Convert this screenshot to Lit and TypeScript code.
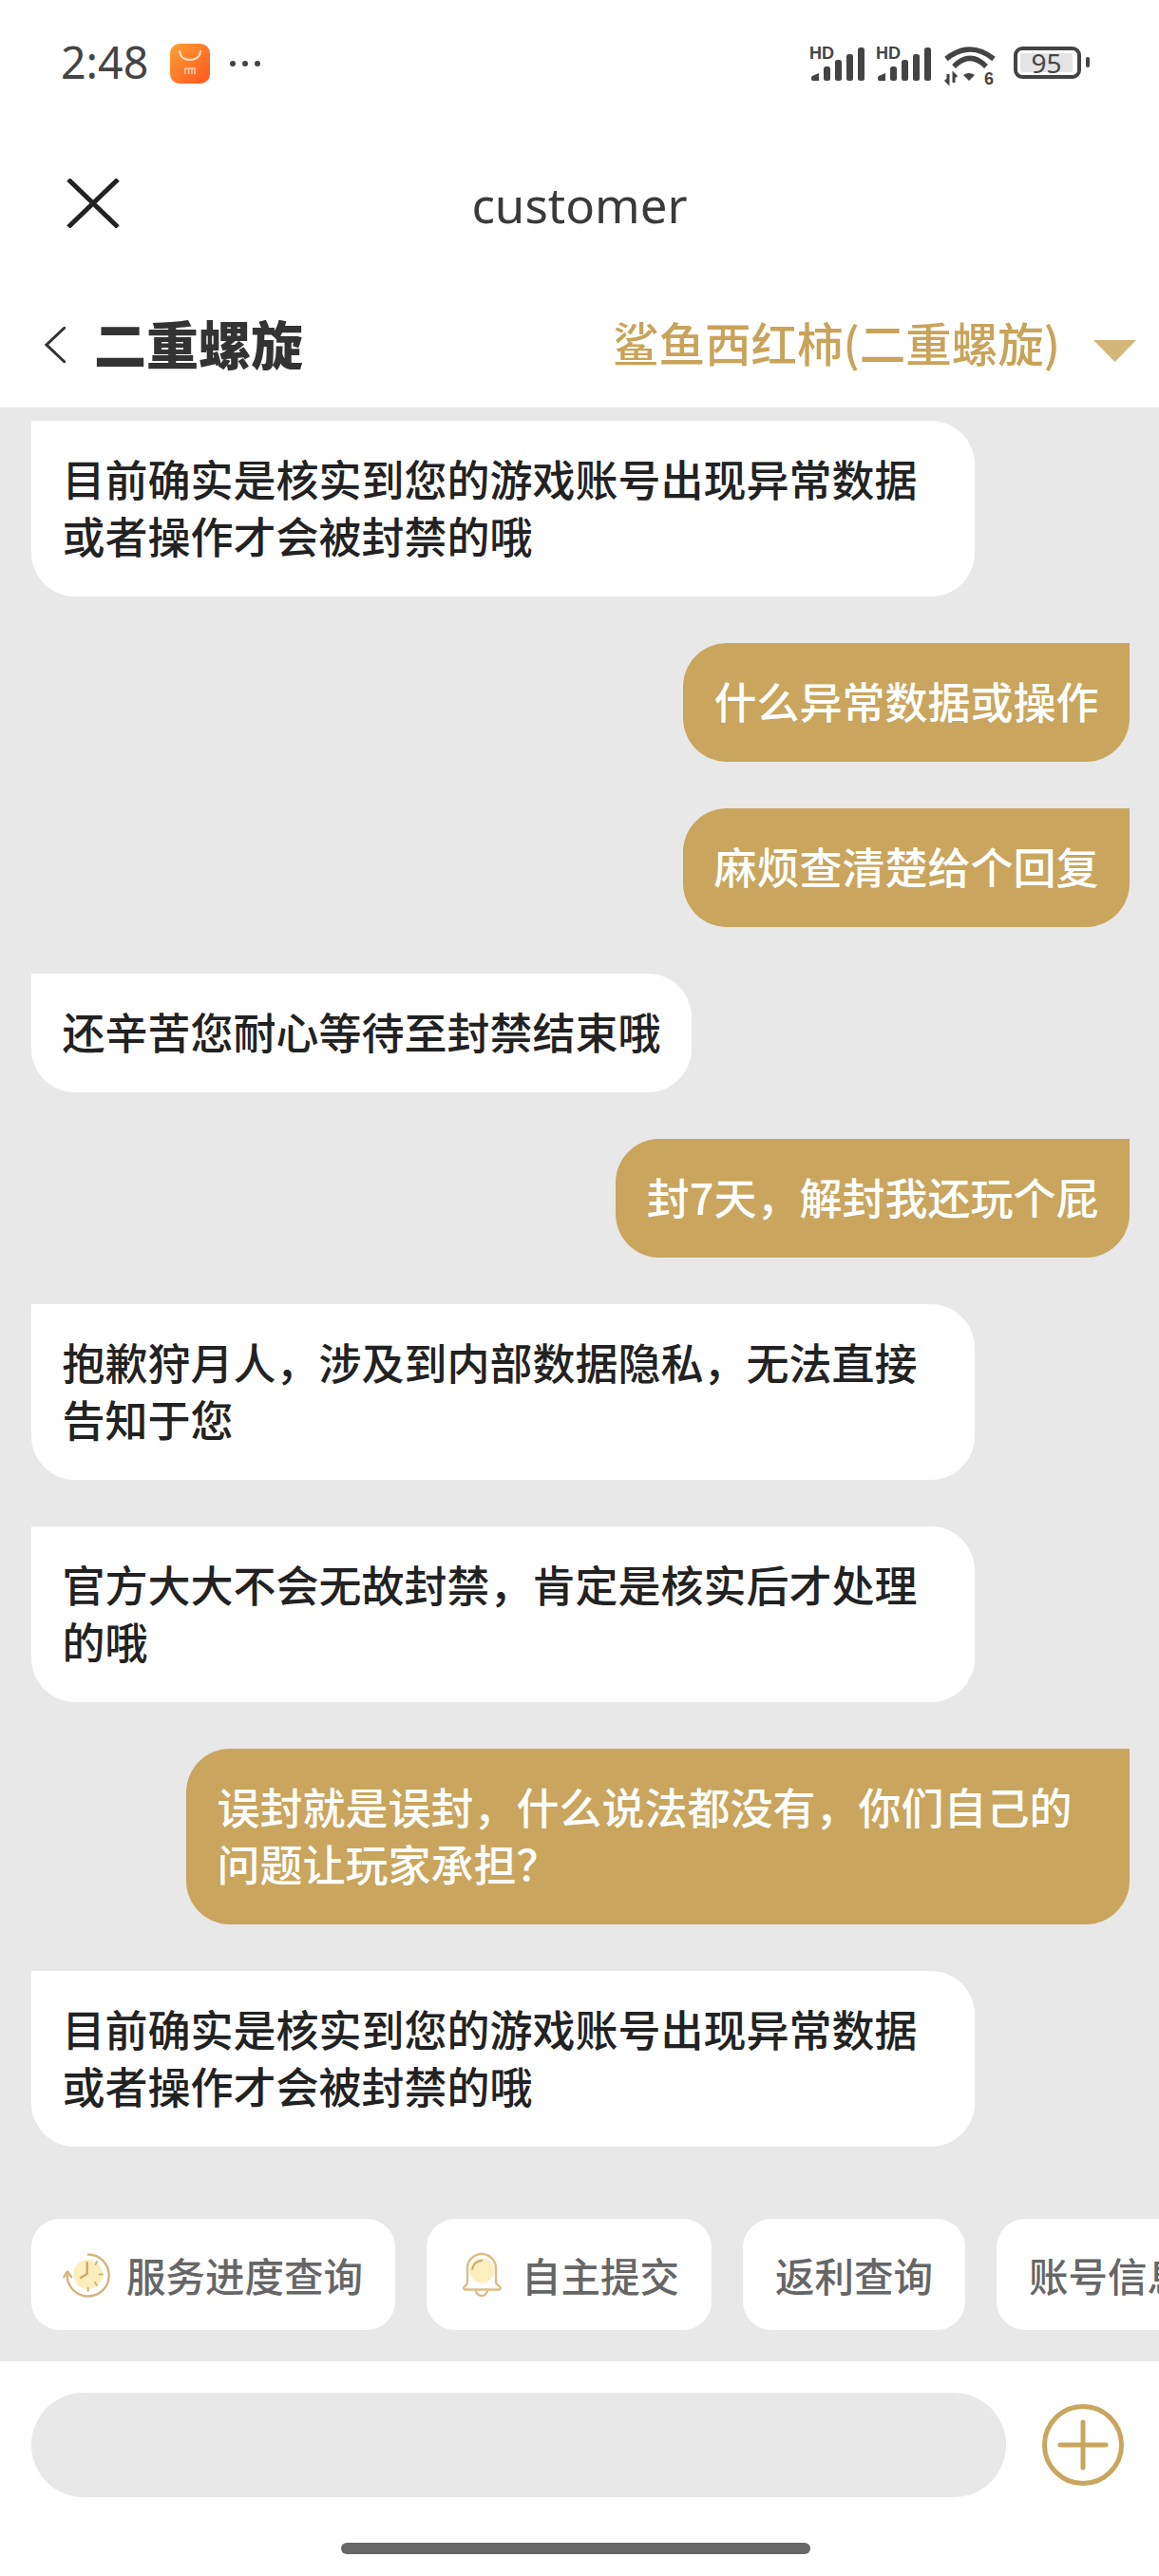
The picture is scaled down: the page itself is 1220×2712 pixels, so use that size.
import { LitElement, html, css, svg } from "lit";
import { customElement } from "lit/decorators.js";

type Msg = { me?: boolean; text: string };

const MESSAGES: Msg[] = [
  { text: "目前确实是核实到您的游戏账号出现异常数据或者操作才会被封禁的哦" },
  { me: true, text: "什么异常数据或操作" },
  { me: true, text: "麻烦查清楚给个回复" },
  { text: "还辛苦您耐心等待至封禁结束哦" },
  { me: true, text: "封7天，解封我还玩个屁" },
  { text: "抱歉狩月人，涉及到内部数据隐私，无法直接告知于您" },
  { text: "官方大大不会无故封禁，肯定是核实后才处理的哦" },
  { me: true, text: "误封就是误封，什么说法都没有，你们自己的问题让玩家承担？" },
  { text: "目前确实是核实到您的游戏账号出现异常数据或者操作才会被封禁的哦" },
];

const signal = () => html`
  <div class="signal">
    <span class="hd">HD</span>
    <svg width="57" height="36" viewBox="0 0 57 36" fill="#444">
      <path d="M1.500 36Q0 36 0 34v-1q0-1 1-2l7-3v8z" />
      <rect x="13" y="21" width="7" height="15" rx="2.500" />
      <rect x="25" y="14" width="7" height="22" rx="2.500" />
      <rect x="37" y="8" width="7" height="28" rx="2.500" />
      <rect x="49" y="1" width="7" height="35" rx="2.500" />
    </svg>
  </div>
`;

const clockIcon = svg`
  <svg width="50" height="50" viewBox="0 0 50 50" fill="none">
    <circle cx="26.700" cy="24.500" r="15.500" fill="#fdeec0" />
    <path d="M27 3.500A22 22 0 1 1 4.700 25.500" stroke="#d6b477" stroke-width="2.400" stroke-linecap="round" />
    <path d="M1.300 27L5 21.500 9 27" stroke="#d6b477" stroke-width="2.400" stroke-linecap="round" stroke-linejoin="round" />
    <path d="M25.700 12v12L19 28" stroke="#cfa865" stroke-width="2.400" stroke-linecap="round" stroke-linejoin="round" />
    <path d="M36 11l-1.500 3M42 24.500h-3.500M36 36l-2-3M26.700 42v-3.500" stroke="#d6b477" stroke-width="2" stroke-linecap="round" />
  </svg>
`;

const bellIcon = svg`
  <svg width="50" height="50" viewBox="0 0 50 50" fill="none">
    <circle cx="25.300" cy="20.500" r="13" fill="#fdeec0" />
    <path d="M19 41a6 6 0 0 0 12 0" stroke="#dcbd85" stroke-width="2.400" />
    <path d="M10 32V18a15 15 0 0 1 30 0v14q0 2.500 3 4.500q3 2 1 4H7q-2-2 1-4q2-2 2-4.500z" stroke="#dcbd85" stroke-width="2.400" stroke-linejoin="round" />
    <path d="M15.300 18.800q1-7.500 10-9" stroke="#cfa865" stroke-width="2" stroke-linecap="round" />
  </svg>
`;

@customElement("app-root")
export class AppRoot extends LitElement {
  static styles = css`
    :host {
      display: flex;
      flex-direction: column;
      width: 1220px;
      height: 2712px;
      overflow: hidden;
      background: #fff;
      font-family: "Noto Sans CJK SC", "Noto Sans", sans-serif;
    }

    .status {
      height: 136px;
      flex: none;
      box-sizing: border-box;
      padding: 46px 73px 0 64px;
      display: flex;
      align-items: flex-start;
      color: #444;
    }
    .time {
      font: 400 46.500px/42px "Noto Sans", sans-serif;
      margin-top: -2px;
    }
    .app-icon {
      margin-left: 23px;
      flex: none;
    }
    .dots {
      margin: 18px 0 0 21px;
      display: flex;
      gap: 7px;
    }
    .dots i {
      width: 6px;
      height: 6px;
      border-radius: 50%;
      background: #444;
    }
    .status-right {
      margin-left: auto;
      display: flex;
      align-items: flex-start;
    }
    .signal {
      width: 70px;
      height: 36px;
      padding-left: 3px;
      box-sizing: border-box;
      margin-top: 3px;
      position: relative;
    }
    .hd {
      position: absolute;
      left: 1px;
      top: -2px;
      font: 700 18px/18px "Liberation Sans", sans-serif;
    }
    .wifi {
      margin: 2px 0 0 3px;
    }
    .battery {
      margin-left: 19px;
      margin-top: 3px;
      width: 71px;
      height: 34px;
      box-sizing: border-box;
      border: 4px solid #444;
      border-radius: 9px;
      padding: 3px;
    }
    .battery-fill {
      width: 55px;
      height: 20px;
      background: #e4e4e4;
      border-radius: 2px;
      font: 400 28px/20px "Noto Sans", sans-serif;
      text-align: center;
      color: #444;
    }
    .battery-tip {
      width: 4px;
      height: 11px;
      background: #444;
      border-radius: 2px;
      margin: 14px 0 0 5px;
    }

    .title-bar {
      height: 155px;
      flex: none;
      display: grid;
      grid-template-columns: 1fr auto 1fr;
      align-items: center;
      padding: 0 70px;
      box-sizing: border-box;
    }
    .title-bar h1 {
      margin: 2px 0 0;
      font: 400 51px/60px "Noto Sans", sans-serif;
      color: #3a3a3a;
    }
    .close {
      display: block;
    }

    .game-bar {
      height: 138px;
      flex: none;
      box-sizing: border-box;
      padding: 0 24px 0 47px;
      display: flex;
      align-items: center;
    }
    .back {
      margin-top: 6px;
      flex: none;
    }
    .game-bar h2 {
      margin: 0 0 0 30px;
      font-size: 55px;
      font-weight: 900;
      line-height: 60px;
      color: #333;
    }
    .server {
      margin-left: auto;
      font-size: 48.500px;
      line-height: 60px;
      font-weight: 500;
      color: #c9a35a;
    }
    .caret {
      margin-left: 35px;
      flex: none;
      margin-top: 19px;
    }

    .chat {
      flex: 1;
      background: #e8e8e8;
      display: flex;
      flex-direction: column;
      min-height: 0;
    }
    .messages {
      padding: 14px 31px 0 33px;
      display: flex;
      flex-direction: column;
      gap: 49px;
    }
    .bubble {
      box-sizing: border-box;
      max-width: 993px;
      padding: 31px 32.500px 34px;
      font-size: 45px;
      line-height: 60px;
      font-weight: 500;
      border-radius: 0 46px 46px 46px;
      background: #fff;
      color: #222;
      align-self: flex-start;
    }
    .bubble.me {
      align-self: flex-end;
      background: #c9a55e;
      color: #fff;
      border-radius: 46px 0 46px 46px;
    }

    .chips {
      margin-top: auto;
      padding: 0 0 33px 33px;
      display: flex;
      gap: 33px;
      overflow: hidden;
    }
    .chip {
      flex: none;
      height: 117px;
      box-sizing: border-box;
      padding: 0 34px;
      display: flex;
      align-items: center;
      gap: 17px;
      background: #fff;
      border-radius: 30px;
      font-size: 41.500px;
      font-weight: 500;
      color: #666;
    }
    .chip.has-icon {
      padding-left: 33px;
    }

    .composer {
      height: 226px;
      flex: none;
      box-sizing: border-box;
      padding-top: 33px;
      background: #fff;
    }
    .composer-row {
      padding: 0 33px;
      display: flex;
      align-items: center;
    }
    .input {
      flex: 1;
      height: 110px;
      border-radius: 55px;
      background: #e8e8e8;
    }
    .plus {
      margin: 0 4px 0 38px;
      flex: none;
    }
    .home-bar {
      width: 494px;
      height: 12px;
      border-radius: 6px;
      background: #666;
      margin: 48px 0 0 359px;
    }
  `;

  render() {
    return html`
      <div class="status">
        <span class="time">2:48</span>
        <svg class="app-icon" width="42" height="42" viewBox="0 0 42 42">
          <defs>
            <linearGradient id="mi" x1="0" y1="0" x2="1" y2="1">
              <stop offset="0" stop-color="#ffa033" />
              <stop offset="1" stop-color="#ff5520" />
            </linearGradient>
          </defs>
          <rect width="42" height="42" rx="10" fill="url(#mi)" />
          <path d="M10 8q1 9 11 9t11-9" stroke="#ffe9d2" stroke-width="2" fill="none" stroke-linecap="round" />
          <path d="M16 32v-6h10v6M19.500 27v5M23 27v5" stroke="#ffd2b0" stroke-width="1.500" fill="none" />
        </svg>
        <div class="dots"><i></i><i></i><i></i></div>
        <div class="status-right">
          ${signal()} ${signal()}
          <svg class="wifi" width="54" height="50" viewBox="0 0 54 50" fill="none" stroke="#444">
            <path d="M2 14Q27 -6 52 14" stroke-width="5.500" />
            <path d="M10 22Q27 5 44 22" stroke-width="5.500" />
            <path d="M20 31Q26 27 32 31L26 37z" fill="#444" stroke="none" />
            <path d="M4 30v9l-3-3M10 39v-9l3 3" stroke-width="3" />
            <text x="42" y="41" font-size="18" font-weight="700" font-family="Liberation Sans" fill="#444" stroke="none">6</text>
          </svg>
          <div class="battery"><div class="battery-fill">95</div></div>
          <div class="battery-tip"></div>
        </div>
      </div>

      <div class="title-bar">
        <svg class="close" width="56" height="52" viewBox="0 0 56 52">
          <path d="M2 1l52 50M54 1L2 51" stroke="#222" stroke-width="5" fill="none" />
        </svg>
        <h1>customer</h1>
        <span></span>
      </div>

      <div class="game-bar">
        <svg class="back" width="22" height="38" viewBox="0 0 22 38">
          <path d="M21 1L2 19l19 18" stroke="#333" stroke-width="3" fill="none" stroke-linecap="round" />
        </svg>
        <h2>二重螺旋</h2>
        <span class="server">鲨鱼西红柿(二重螺旋)</span>
        <svg class="caret" width="45" height="23" viewBox="0 0 45 23">
          <path d="M0 0h45L22.500 23z" fill="#d4b678" />
        </svg>
      </div>

      <div class="chat">
        <div class="messages">
          ${MESSAGES.map((m) => html`<div class="bubble ${m.me ? "me" : ""}">${m.text}</div>`)}
        </div>
        <div class="chips">
          <div class="chip has-icon">${clockIcon}<span>服务进度查询</span></div>
          <div class="chip has-icon">${bellIcon}<span>自主提交</span></div>
          <div class="chip">返利查询</div>
          <div class="chip">账号信息查询</div>
        </div>
      </div>

      <div class="composer">
        <div class="composer-row">
          <div class="input"></div>
          <svg class="plus" width="86" height="86" viewBox="0 0 86 86" fill="none" stroke="#c9a55e" stroke-linecap="round">
            <circle cx="43" cy="43" r="40.500" stroke-width="5" />
            <path d="M19 43h48M43 19v48" stroke-width="5" />
          </svg>
        </div>
        <div class="home-bar"></div>
      </div>
    `;
  }
}
